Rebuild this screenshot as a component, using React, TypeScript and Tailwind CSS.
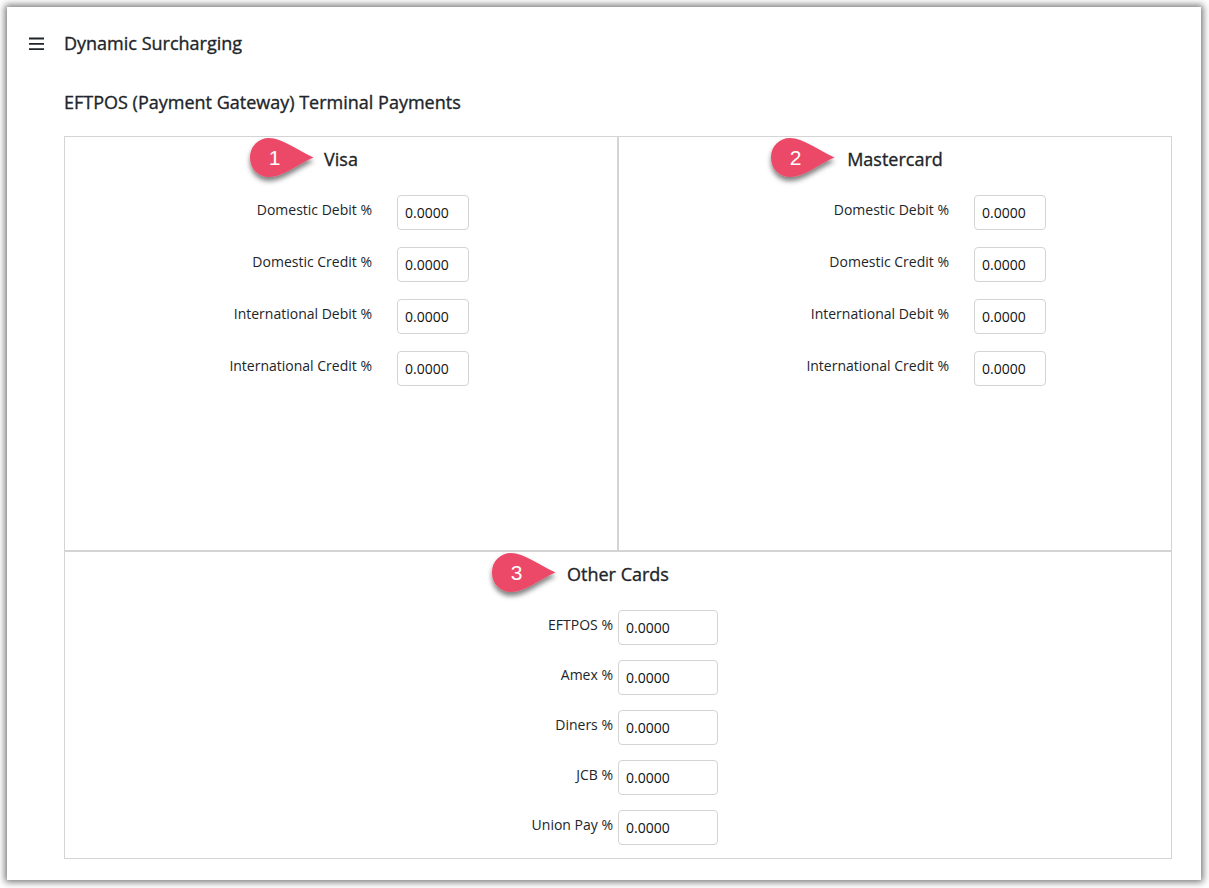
const font = { fontFamily: '"Open Sans", sans-serif' };

function Badge({ n, className }: { n: string; className: string }) {
  return (
    <div className={`absolute w-[76px] h-[60px] ${className}`}>
      <svg width="76" height="60" viewBox="0 0 76 60" className="absolute inset-0">
        <defs>
          <filter id={`s${n}`} x="-20%" y="-20%" width="140%" height="150%">
            <feDropShadow dx="0" dy="4" stdDeviation="2.500" floodColor="#000" floodOpacity="0.5" />
          </filter>
        </defs>
        <path
          d="M5 25.500C5 14 13.500 6 24 6C37 6 52 18 68.500 25.500C52 32.500 38 45 24 45C13.500 45 5 37 5 25.500Z"
          fill="#ec4a68"
          filter={`url(#s${n})`}
        />
      </svg>
      <span className="absolute left-[10px] top-[13px] w-[39px] text-center text-[21px] leading-[26px] text-white font-['Liberation_Sans',sans-serif]">
        {n}
      </span>
    </div>
  );
}

function Row({ label, labelW, gap, inputW, mb, pt }: { label: string; labelW: string; gap: string; inputW: string; mb: string; pt: string }) {
  return (
    <div className={`flex items-start ${gap} ${mb}`}>
      <label className={`${labelW} ${pt} text-right text-[14px] leading-[20px] text-[#212529]`}>{label}</label>
      <input
        readOnly
        value="0.0000"
        className={`${inputW} h-[35px] rounded-[4px] border border-[#d4d4d4] bg-white px-[7px] text-[14px] text-[#111] outline-none`}
      />
    </div>
  );
}

function CardColumn({ title, labelW, className }: { title: string; labelW: string; className: string }) {
  const rows = ["Domestic Debit %", "Domestic Credit %", "International Debit %", "International Credit %"];
  return (
    <div className={`h-[413px] ${className}`}>
      <h3 className="pt-[10px] h-[58px] text-center text-[18px] leading-[24px] font-medium text-[#212529] [-webkit-text-stroke:0.35px_#212529]">{title}</h3>
      {rows.map((r) => (
        <Row key={r} label={r} labelW={labelW} gap="gap-[25px]" inputW="w-[72px]" mb="mb-[17px]" pt="pt-[5px]" />
      ))}
    </div>
  );
}

export default function App() {
  const others = ["EFTPOS %", "Amex %", "Diners %", "JCB %", "Union Pay %"];
  return (
    <div className="h-[888px] w-[1209px] overflow-hidden bg-white pl-[7px] pt-[7px]" style={font}>
      <div className="relative h-[873px] w-[1194px] bg-white shadow-[0_0_7px_2px_rgba(0,0,0,0.55)] text-[#212529]">
        <header className="flex h-[74px] items-center pl-[21px]">
          <svg width="17" height="14" viewBox="0 0 17 14" className="text-[#212529]">
            <path d="M1 1.500H16M1 6.800H16M1 12.200H16" stroke="currentColor" strokeWidth="1.800" />
          </svg>
          <h1 className="ml-[19px] mb-[3px] text-[18px] font-medium leading-[24px] [-webkit-text-stroke:0.35px_#212529]">Dynamic Surcharging</h1>
        </header>
        <div className="pl-[57px] pt-[9px]">
          <h2 className="mb-[22px] h-[24px] text-[18px] font-medium leading-[24px] [-webkit-text-stroke:0.35px_#212529]">EFTPOS (Payment Gateway) Terminal Payments</h2>
          <div className="w-[1108px] border border-[#d4d4d4]">
            <div className="flex border-b-2 border-[#d4d4d4]">
              <CardColumn title="Visa" labelW="w-[307px]" className="w-[554px] border-r-2 border-[#d4d4d4]" />
              <CardColumn title="Mastercard" labelW="w-[330px]" className="w-[552px]" />
            </div>
            <div className="h-[306px]">
              <h3 className="pt-[10px] h-[58px] text-center text-[18px] leading-[24px] font-medium text-[#212529] [-webkit-text-stroke:0.35px_#212529]">Other Cards</h3>
              {others.map((r) => (
                <Row key={r} label={r} labelW="w-[548px]" gap="gap-[5px]" inputW="w-[100px]" mb="mb-[15px]" pt="pt-[5px]" />
              ))}
            </div>
          </div>
        </div>
        <Badge n="1" className="left-[238px] top-[125px]" />
        <Badge n="2" className="left-[759px] top-[125px]" />
        <Badge n="3" className="left-[480px] top-[540px]" />
      </div>
    </div>
  );
}
